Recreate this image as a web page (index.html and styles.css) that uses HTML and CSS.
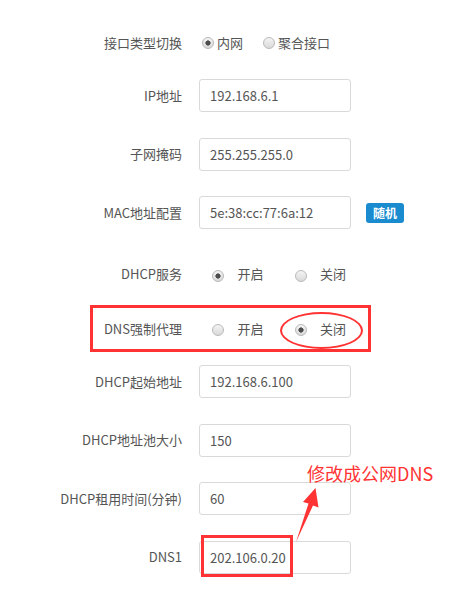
FILE: index.html
```html
<!DOCTYPE html>
<html lang="zh-CN">
<head>
<meta charset="utf-8">
<title>LAN 设置</title>
<link rel="stylesheet" href="styles.css">
</head>
<body>
<div class="page">
  <form class="form">
    <div class="row row--radio">
      <span class="label">接口类型切换</span>
      <div class="control radios radios--compact">
        <label class="opt"><input type="radio" name="iftype" class="radio" checked><span class="opt-text">内网</span></label>
        <label class="opt"><input type="radio" name="iftype" class="radio"><span class="opt-text">聚合接口</span></label>
      </div>
    </div>
    <div class="row">
      <span class="label">IP地址</span>
      <div class="control"><input class="input" type="text" value="192.168.6.1"></div>
    </div>
    <div class="row">
      <span class="label">子网掩码</span>
      <div class="control"><input class="input" type="text" value="255.255.255.0"></div>
    </div>
    <div class="row">
      <span class="label">MAC地址配置</span>
      <div class="control">
        <input class="input" type="text" value="5e:38:cc:77:6a:12">
        <button class="btn" type="button">随机</button>
      </div>
    </div>
    <div class="row row--radio">
      <span class="label">DHCP服务</span>
      <div class="control radios radios--wide">
        <label class="opt"><input type="radio" name="dhcp" class="radio" checked><span class="opt-text">开启</span></label>
        <label class="opt"><input type="radio" name="dhcp" class="radio"><span class="opt-text">关闭</span></label>
      </div>
    </div>
    <div class="row row--radio">
      <span class="label">DNS强制代理</span>
      <div class="control radios radios--wide">
        <label class="opt"><input type="radio" name="dnsproxy" class="radio"><span class="opt-text">开启</span></label>
        <label class="opt"><input type="radio" name="dnsproxy" class="radio" checked><span class="opt-text">关闭</span></label>
      </div>
    </div>
    <div class="row">
      <span class="label">DHCP起始地址</span>
      <div class="control"><input class="input" type="text" value="192.168.6.100"></div>
    </div>
    <div class="row">
      <span class="label">DHCP地址池大小</span>
      <div class="control"><input class="input" type="text" value="150"></div>
    </div>
    <div class="row">
      <span class="label">DHCP租用时间(分钟)</span>
      <div class="control"><input class="input" type="text" value="60"></div>
    </div>
    <div class="row">
      <span class="label">DNS1</span>
      <div class="control"><input class="input" type="text" value="202.106.0.20"></div>
    </div>
  </form>

  <div class="mark mark--proxy"></div>
  <div class="ring"></div>
  <div class="mark mark--dns1"></div>
  <svg class="arrow" viewBox="290 480 40 70" width="40" height="70">
    <polygon points="315.5,488 303,502 308.5,503.5 296,542 313,505.5 318.5,507.5" fill="#ff3333"/>
  </svg>
  <div class="note">修改成公网DNS</div>
</div>
</body>
</html>
```

FILE: styles.css
```css
* { box-sizing: border-box; }

body {
  margin: 0;
  background: #fff;
  color: #555;
  font-family: "Noto Sans CJK SC", "Microsoft YaHei", sans-serif;
  font-size: 13px;
}

.page {
  position: relative;
  width: 466px;
  height: 590px;
  overflow: hidden;
}

.form {
  display: flex;
  flex-direction: column;
  padding-top: 26px;
  margin: 0;
}

.row {
  display: flex;
  align-items: center;
  height: 33px;
  margin-top: 25.5px;
}
.row:first-child { margin-top: 0; }
.row.row--radio { margin-top: 28.5px; }
.row--radio + .row.row--radio { margin-top: 21.5px; }
.row--radio + .row:not(.row--radio) { margin-top: 20px; }
.row.row--radio:first-child { margin-top: 0; }

.label {
  flex: none;
  width: 182px;
  text-align: right;
  line-height: 18px;
  white-space: nowrap;
}

.control {
  display: flex;
  align-items: center;
  margin-left: 17px;
}

.input {
  width: 152px;
  height: 33px;
  margin: 0;
  padding: 0 10px;
  border: 1px solid #d9d9d9;
  border-radius: 3px;
  background: #fff;
  color: #555;
  font-family: inherit;
  font-size: 13px;
  outline: none;
}

.btn {
  margin-left: 15px;
  height: 20px;
  padding: 0 7px;
  border: none;
  border-radius: 3px;
  background: #1a8bcf;
  color: #fff;
  font-family: inherit;
  font-size: 12px;
  font-weight: bold;
  line-height: 20px;
}

.radios { display: flex; align-items: center; }
.opt { display: flex; align-items: center; line-height: 18px; }

.radio {
  appearance: none;
  -webkit-appearance: none;
  flex: none;
  width: 12px;
  height: 12px;
  margin: 0;
  border: 1px solid #b9b9b9;
  border-radius: 50%;
  background: linear-gradient(#f4f4f4, #d9d9d9);
}
.radio:checked {
  background:
    radial-gradient(circle, #4d4d4d 0 2.3px, transparent 2.9px),
    linear-gradient(#f4f4f4, #d9d9d9);
}

.radios--compact .radio { margin-left: 3px; }
.radios--compact .opt-text { margin-left: 3px; }
.radios--compact .opt + .opt { margin-left: 17px; }

.radios--wide { padding-left: 13px; }
.radios--wide .radio { margin-top: 3px; }
.radios--wide .opt-text { margin-left: 13.5px; }
.radios--wide .opt + .opt { margin-left: 31px; }

/* annotations drawn over the form */
.mark {
  position: absolute;
  border: 3px solid #ff3333;
}
.mark--proxy { left: 90px; top: 305px; width: 281px; height: 47px; }
.mark--dns1 { left: 201px; top: 535px; width: 92px; height: 42px; }

.ring {
  position: absolute;
  left: 280px;
  top: 312px;
  width: 83px;
  height: 37px;
  border: 2.5px solid #ff3333;
  border-radius: 50%;
}

.arrow {
  position: absolute;
  left: 290px;
  top: 480px;
}

.note {
  position: absolute;
  left: 307px;
  top: 463px;
  font-size: 18px;
  line-height: 20px;
  color: #ff3333;
  white-space: nowrap;
}
```
